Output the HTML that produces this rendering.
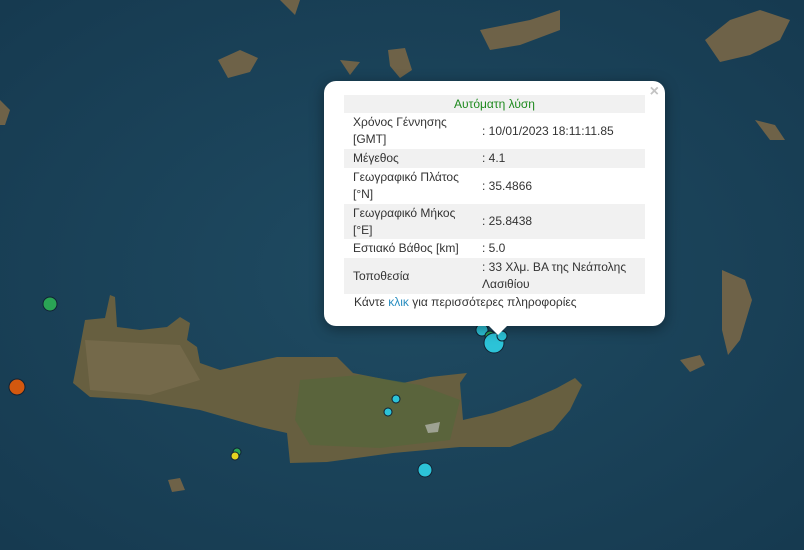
<!DOCTYPE html>
<html><head><meta charset="utf-8"><style>
body{margin:0;width:804px;height:550px;overflow:hidden;background:#1b4258;font-family:"Liberation Sans",Arial,sans-serif}
svg{position:absolute;left:0;top:0}
.pop{position:absolute;left:324px;top:81px;width:341px;height:245px;background:#fff;border-radius:12px;box-shadow:0 3px 14px rgba(0,0,0,.4)}
.tip{position:absolute;left:488px;top:325px;width:0;height:0;border-left:10px solid transparent;border-right:10px solid transparent;border-top:10px solid #fff}
.x{position:absolute;right:6px;top:2px;color:#c3c3c3;font-size:16px;font-weight:bold}
table{position:absolute;left:20px;top:14px;width:301px;border-collapse:collapse;font-size:12px;color:#333}
td{padding:0 0 0 9px;line-height:17px;vertical-align:middle}
tr.s td{background:#f1f1f1}
.link{position:absolute;left:30px;top:214px;font-size:12px;color:#333}
.link span{color:#2a8ec0}
</style></head><body>
<svg width="804" height="550">
<defs><radialGradient id="g" cx="50%" cy="50%" r="70%"><stop offset="0" stop-color="#1f4b62"/><stop offset="1" stop-color="#163a50"/></radialGradient></defs>
<rect width="804" height="550" fill="url(#g)"/>
<g fill="#6e6248">
<polygon points="218,60 240,50 258,58 250,72 228,78"/>
<polygon points="388,50 405,48 412,70 400,78 390,66"/>
<polygon points="480,30 530,20 560,10 560,30 520,45 490,50"/>
<polygon points="705,40 730,20 760,10 790,20 780,40 750,55 720,62"/>
<polygon points="722,270 745,280 752,300 740,340 728,355 722,330"/>
<polygon points="680,360 700,355 705,365 690,372"/>
<polygon points="755,120 775,125 785,140 770,140"/>
<polygon points="168,480 180,478 185,490 172,492"/>
<polygon points="280,0 300,0 295,15"/>
<polygon points="340,60 360,62 350,75"/>
<polygon points="0,100 10,110 5,125 0,125"/>
</g>
<polygon fill="#675f40" points="110,295 115,297 117,327 140,330 167,327 180,317 190,323 187,340 197,347 200,363 220,370 277,357 337,357 353,373 403,383 430,377 467,373 460,383 463,420 493,413 530,400 557,388 575,378 582,385 570,410 553,430 510,447 460,447 393,453 327,462 290,463 287,433 260,427 200,410 140,400 90,397 73,383 80,347 85,320 105,318"/>
<polygon fill="#55673a" opacity=".7" points="300,380 360,375 420,385 460,400 450,440 380,448 310,445 295,420"/>
<polygon fill="#7d6f52" opacity=".6" points="85,340 180,345 200,380 150,395 90,390"/>
<polygon fill="#ccc" opacity=".6" points="425,425 440,422 438,432 428,433"/>
<g stroke="#123" stroke-width="1">
<circle cx="50" cy="304" r="7" fill="#2aa455"/>
<circle cx="17" cy="387" r="8" fill="#d3580f"/>
<circle cx="396" cy="399" r="4" fill="#2cc3d8"/>
<circle cx="388" cy="412" r="4" fill="#2cc3d8"/>
<circle cx="425" cy="470" r="7" fill="#2cc3d8"/>
<circle cx="237" cy="452" r="4" fill="#2aa455"/>
<circle cx="235" cy="456" r="4" fill="#e3d320"/>
<circle cx="482" cy="330" r="6" fill="#2cc3d8"/>
<circle cx="490" cy="336" r="5" fill="#2aa455"/>
<circle cx="494" cy="343" r="10" fill="#2cc3d8"/>
<circle cx="502" cy="336" r="5" fill="#2cc3d8"/>
</g>
</svg>
<div class="pop">
<div class="x">×</div>
<table>
<tr class="s"><td colspan="2" style="text-align:center;color:#1e8a1e;height:18px;padding:0">Αυτόματη λύση</td></tr>
<tr style="height:36px"><td style="width:120px">Χρόνος Γέννησης<br>[GMT]</td><td>: 10/01/2023 18:11:11.85</td></tr>
<tr class="s" style="height:19px"><td>Μέγεθος</td><td>: 4.1</td></tr>
<tr style="height:36px"><td>Γεωγραφικό Πλάτος<br>[°N]</td><td>: 35.4866</td></tr>
<tr class="s" style="height:35px"><td>Γεωγραφικό Μήκος<br>[°E]</td><td>: 25.8438</td></tr>
<tr style="height:19px"><td>Εστιακό Βάθος [km]</td><td>: 5.0</td></tr>
<tr class="s" style="height:36px"><td>Τοποθεσία</td><td>: 33 Χλμ. ΒΑ της Νεάπολης<br>Λασιθίου</td></tr>
</table>
<div class="link">Κάντε <span>κλικ</span> για περισσότερες πληροφορίες</div>
</div>
<div class="tip"></div>
</body></html>
